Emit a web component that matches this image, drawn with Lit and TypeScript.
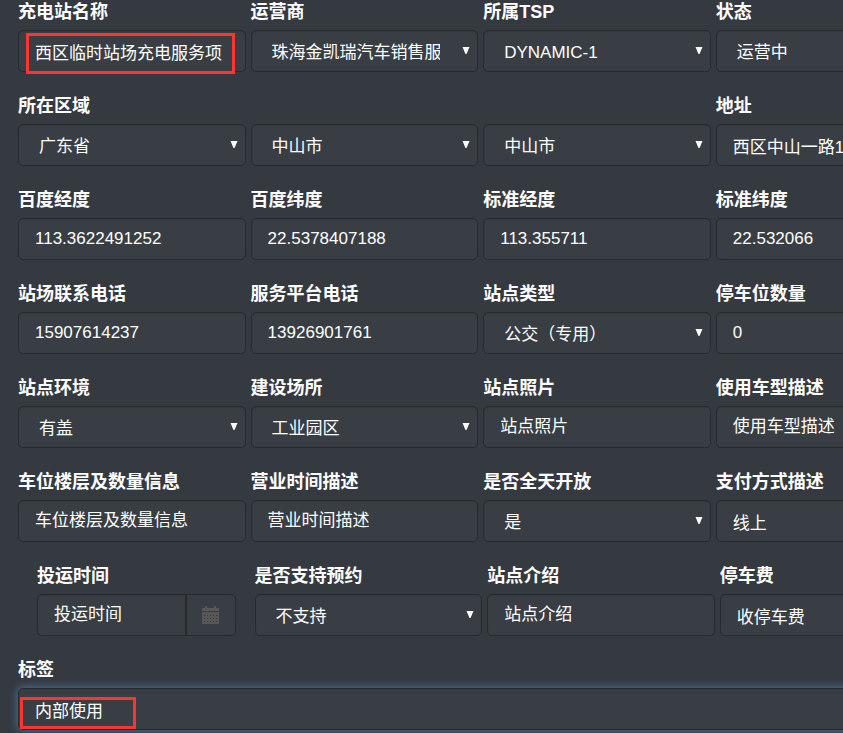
import { LitElement, html, css, svg, nothing } from "lit";
import { customElement, property } from "lit/decorators.js";
import { classMap } from "lit/directives/class-map.js";

type Kind = "text" | "select" | "date";

interface Field {
  id: string;
  label?: string;
  kind?: Kind;
  value?: string;
  placeholder?: string;
  aria?: string;
  marked?: boolean;
}

const ROWS: Field[][] = [
  [
    { id: "name", label: "充电站名称", value: "西区临时站场充电服务项", marked: true },
    { id: "operator", label: "运营商", kind: "select", value: "珠海金凯瑞汽车销售服务有限公司" },
    { id: "tsp", label: "所属TSP", kind: "select", value: "DYNAMIC-1" },
    { id: "status", label: "状态", kind: "select", value: "运营中" },
  ],
  [
    { id: "province", label: "所在区域", kind: "select", value: "广东省" },
    { id: "city", aria: "城市", kind: "select", value: "中山市" },
    { id: "district", aria: "区县", kind: "select", value: "中山市" },
    { id: "address", label: "地址", value: "西区中山一路1号" },
  ],
  [
    { id: "baidu-lng", label: "百度经度", value: "113.3622491252" },
    { id: "baidu-lat", label: "百度纬度", value: "22.5378407188" },
    { id: "lng", label: "标准经度", value: "113.355711" },
    { id: "lat", label: "标准纬度", value: "22.532066" },
  ],
  [
    { id: "site-phone", label: "站场联系电话", value: "15907614237" },
    { id: "service-phone", label: "服务平台电话", value: "13926901761" },
    { id: "site-type", label: "站点类型", kind: "select", value: "公交（专用）" },
    { id: "parking", label: "停车位数量", value: "0" },
  ],
  [
    { id: "environment", label: "站点环境", kind: "select", value: "有盖" },
    { id: "place", label: "建设场所", kind: "select", value: "工业园区" },
    { id: "photo", label: "站点照片", placeholder: "站点照片" },
    { id: "cars", label: "使用车型描述", placeholder: "使用车型描述" },
  ],
  [
    { id: "floors", label: "车位楼层及数量信息", placeholder: "车位楼层及数量信息" },
    { id: "hours", label: "营业时间描述", placeholder: "营业时间描述" },
    { id: "all-day", label: "是否全天开放", kind: "select", value: "是" },
    { id: "payment", label: "支付方式描述", value: "线上" },
  ],
  [
    { id: "launch", label: "投运时间", kind: "date", placeholder: "投运时间" },
    { id: "booking", label: "是否支持预约", kind: "select", value: "不支持" },
    { id: "intro", label: "站点介绍", placeholder: "站点介绍" },
    { id: "fee", label: "停车费", value: "收停车费" },
  ],
];

@customElement("form-field")
export class FormField extends LitElement {
  @property({ attribute: false }) field!: Field;
  @property({ type: Boolean }) active = false;

  static styles = css`
    :host {
      display: block;
      min-width: 0;
    }
    .label {
      display: block;
      height: 24px;
      line-height: 24px;
      margin-bottom: 6px;
      font-size: 18px;
      font-weight: 700;
      white-space: nowrap;
    }
    .shell {
      position: relative;
      display: grid;
      grid-template-columns: minmax(0, 1fr);
    }
    .shell.date {
      grid-template-columns: minmax(0, 1fr) 50px;
      margin-right: 14px;
    }
    .label.date,
    .shell.date {
      margin-left: 15px;
    }
    .control {
      appearance: none;
      grid-area: 1 / 1;
      box-sizing: border-box;
      width: 100%;
      height: 42px;
      margin: 0;
      padding: 0 16px;
      border: 1px solid #272b2e;
      border-radius: 5px;
      background: #383e43;
      box-shadow: inset 0 1px 1px rgba(0, 0, 0, 0.08);
      color: #fff;
      font-family: inherit;
      font-size: 17px;
      outline: none;
    }
    .control::placeholder {
      color: #fff;
      opacity: 1;
    }
    .control.select {
      padding: 2px 37px 0 20px;
    }
    .control.joined {
      border-radius: 5px 0 0 5px;
    }
    .control.active {
      box-shadow: 0 0 10px rgba(82, 145, 185, 0.8);
    }
    .arrow {
      grid-area: 1 / 1;
      place-self: center end;
      width: 8px;
      height: 8px;
      margin-right: 8px;
      pointer-events: none;
      fill: #fff;
    }
    .picker {
      display: flex;
      align-items: center;
      justify-content: center;
      padding: 0;
      border: 1px solid #272b2e;
      border-radius: 0 5px 5px 0;
      background: #383e43;
    }
    .calendar {
      width: 17px;
      height: 18px;
      fill: #575757;
    }
    .mark {
      position: absolute;
      box-sizing: border-box;
      border: 3px solid #fb3434;
      pointer-events: none;
    }
    .mark.name {
      inset: 3px 11px -2px 8px;
    }
    .mark.tags {
      top: 9px;
      left: 2px;
      width: 116px;
      height: 32px;
    }
  `;

  private renderControl() {
    const { id, kind = "text", value = "", placeholder, aria } = this.field;
    const classes = classMap({
      control: true,
      select: kind === "select",
      joined: kind === "date",
      active: this.active,
    });
    if (kind === "select") {
      return html`
        <select id=${id} class=${classes} aria-label=${aria ?? nothing}>
          <option>${value}</option>
        </select>
        <svg class="arrow" viewBox="0 0 8 8" aria-hidden="true">
          <path d="M0.5 0h7L4.5 7h-1z" />
        </svg>
      `;
    }
    return html`<input
      id=${id}
      class=${classes}
      type="text"
      .value=${value}
      placeholder=${placeholder ?? nothing}
    />`;
  }

  private renderCalendar() {
    const holes = [9, 12, 15].flatMap((y) =>
      [2, 5, 8, 11, 14].map((x) => svg`<path d="M${x} ${y}h1v1h-1z" />`),
    );
    return html`
      <button class="picker" type="button" aria-label="选择日期">
        <svg class="calendar" viewBox="0 0 17 18" aria-hidden="true">
          <path d="M0 2h3V0h2v2h7V0h2v2h3v3H0zM0 6h17v12H0z" />
          <g fill="#383e43">${holes}</g>
        </svg>
      </button>
    `;
  }

  render() {
    const { id, label, kind, marked } = this.field;
    const date = kind === "date";
    return html`
      ${label
        ? html`<label class=${classMap({ label: true, date })} for=${id}>${label}</label>`
        : nothing}
      <div class=${classMap({ shell: true, date })}>
        ${this.renderControl()} ${date ? this.renderCalendar() : nothing}
        ${marked
          ? html`<div class=${classMap({ mark: true, name: id === "name", tags: id === "tags" })}></div>`
          : nothing}
      </div>
    `;
  }
}

@customElement("app-root")
export class AppRoot extends LitElement {
  static styles = css`
    :host {
      display: block;
      min-height: 100vh;
      overflow: hidden;
      background: #353940;
      color: #fff;
      font-family: "Liberation Sans", "Noto Sans CJK SC", sans-serif;
    }
    .form {
      display: flex;
      flex-direction: column;
      gap: 22px;
    }
    .row {
      display: grid;
      grid-template-columns: repeat(4, 27%);
      gap: 5px;
      align-items: end;
      width: 100%;
      margin-left: 18px;
    }
    .row.inset {
      margin-left: 22px;
    }
    .wide {
      margin: 0 -12px 3px 18px;
    }
  `;

  render() {
    return html`
      <form class="form">
        ${ROWS.map(
          (row) => html`
            <div class=${classMap({ row: true, inset: row[0].kind === "date" })}>
              ${row.map((field) => html`<form-field .field=${field}></form-field>`)}
            </div>
          `,
        )}
        <form-field
          class="wide"
          active
          .field=${{ id: "tags", label: "标签", value: "内部使用", marked: true }}
        ></form-field>
      </form>
    `;
  }
}
